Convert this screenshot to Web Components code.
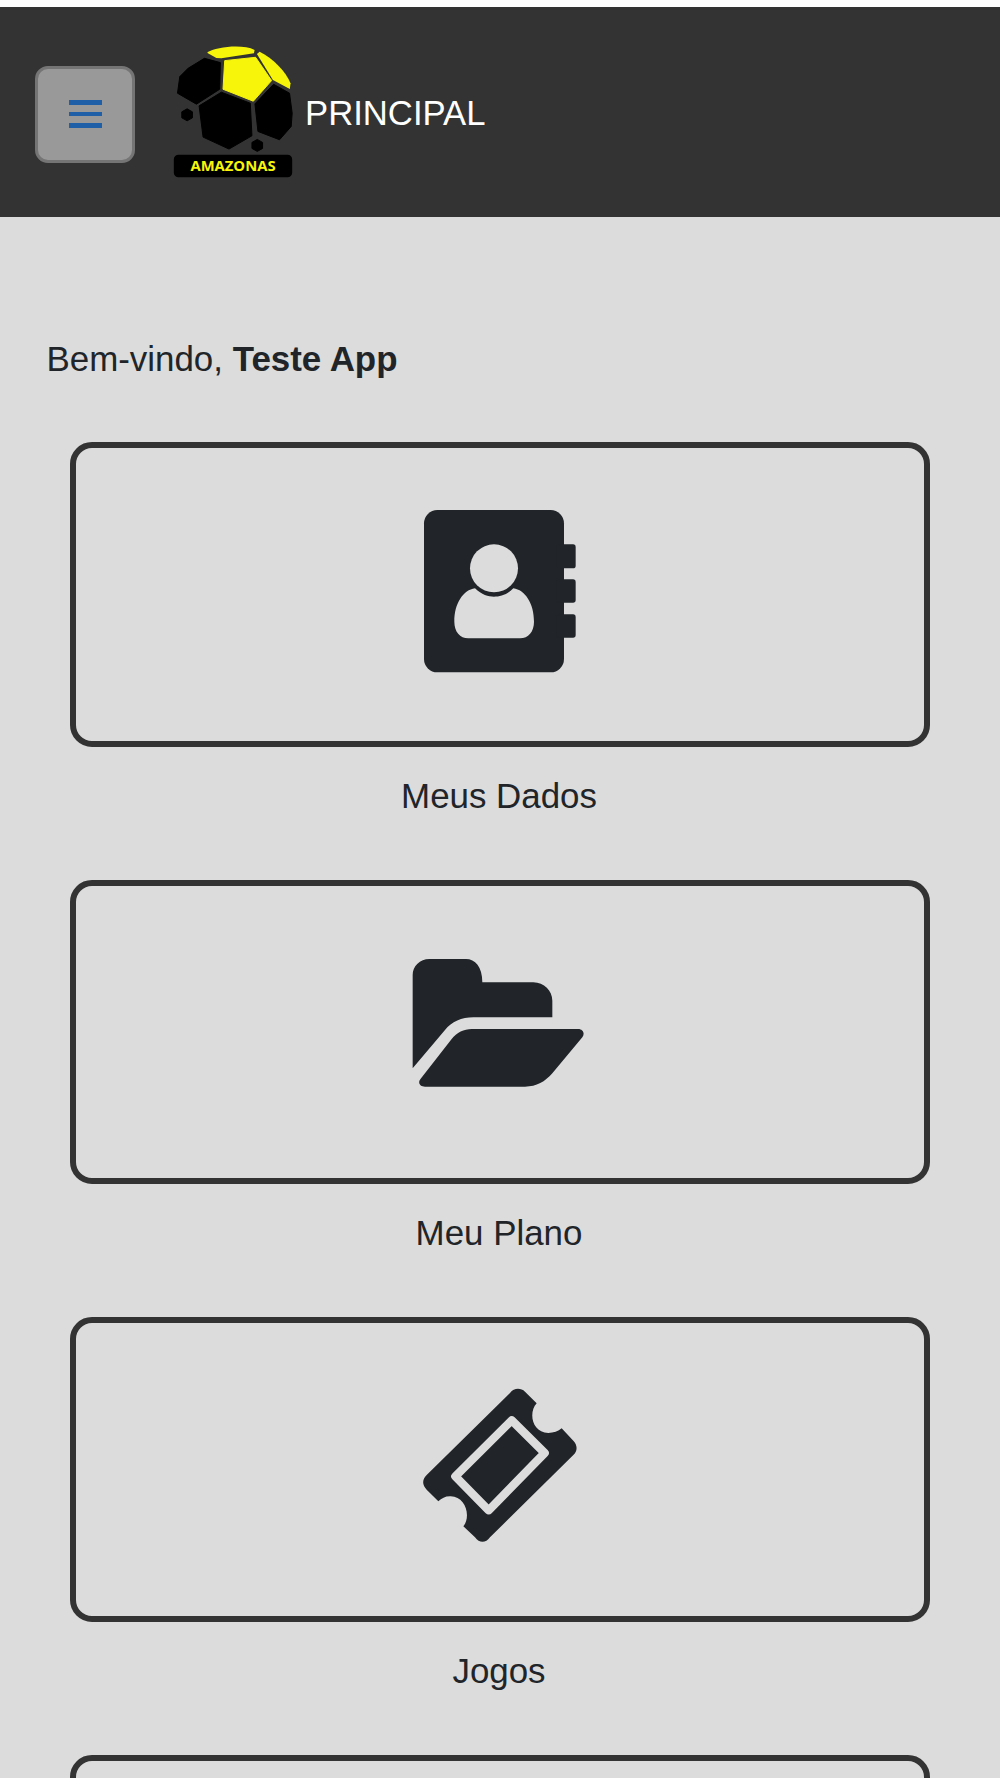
<!DOCTYPE html>
<html lang="pt">
<head>
<meta charset="utf-8">
<title>Principal</title>
<style>
  html, body { margin: 0; height: 1778px; overflow: hidden; background: #dcdcdc; }
  body { font-family: "Liberation Sans", Arial, sans-serif; color: #212529; }
</style>
</head>
<body>
<app-header title-text="PRINCIPAL"></app-header>
<home-page>
  <welcome-line name="Teste App"></welcome-line>

  <tile-card label="Meus Dados">
    <svg viewBox="0 0 600 600" width="200" height="200">
      <rect x="72" y="60" width="420" height="487" rx="40" fill="#212529"/>
      <rect x="470" y="163" width="57" height="72" rx="8" fill="#212529"/>
      <rect x="470" y="268" width="57" height="70" rx="8" fill="#212529"/>
      <rect x="470" y="373" width="57" height="70" rx="8" fill="#212529"/>
      <circle cx="282" cy="235" r="72" fill="#dcdcdc"/>
      <path fill="#dcdcdc" d="M163 395C163 340 190 300 225 295C245 315 265 320 282 320C300 320 320 315 340 295C375 300 402 340 402 395C402 425 385 445 360 445L205 445C180 445 163 425 163 395Z"/>
    </svg>
  </tile-card>

  <tile-card label="Meu Plano">
    <svg viewBox="30 -36 600 600" width="200" height="200">
      <path fill="#212529" d="M68 385L68 105C68 78 90 57 118 57L228 57C255 57 277 80 277 127L430 127C462 127 487 152 487 182L487 232L250 232C215 232 185 245 165 270Z"/>
      <path fill="#212529" d="M245 267L565 267C578 267 586 280 577 292L487 400C465 425 440 440 405 440L105 440C90 440 82 428 92 416L185 297C200 278 222 267 245 267Z"/>
    </svg>
  </tile-card>

  <tile-card label="Jogos">
    <svg viewBox="0 -12 600 600" width="200" height="200">
      <path fill="#212529" d="M330 72C342 56 362 56 375 68L410 103C385 130 395 190 445 192C460 192 475 187 485 178L520 215C533 228 533 246 520 258L270 505C257 523 238 523 225 505L190 472C215 440 195 380 150 382C135 382 125 388 115 397L80 362C66 348 66 332 80 318Z"/>
      <polygon points="335,154 434,252 266,424 166,322" fill="none" stroke="#dcdcdc" stroke-width="25" stroke-linejoin="round"/>
    </svg>
  </tile-card>

  <tile-card label=""></tile-card>
</home-page>

<script>
class AppHeader extends HTMLElement {
  constructor() {
    super();
    this.attachShadow({ mode: "open" });
  }
  connectedCallback() {
    const title = this.getAttribute("title-text");
    this.shadowRoot.innerHTML = `
    <style>
      :host {
        display: flex;
        align-items: center;
        height: 217px;
        padding-left: 35px;
        box-sizing: border-box;
        background: #333;
        border-top: 7px solid #fff;
      }
      .title {
        margin: 2px 0 0 12px;
        font-size: 34.7px;
        color: #fff;
      }
    </style>
    <menu-button></menu-button>
    <brand-logo></brand-logo>
    <div class="title">${title}</div>
    `;
  }
}

class MenuButton extends HTMLElement {
  constructor() {
    super();
    this.attachShadow({ mode: "open" });
    this.shadowRoot.innerHTML = `
    <style>
      :host {
        display: flex;
        flex-direction: column;
        align-items: center;
        justify-content: center;
        gap: 7px;
        box-sizing: border-box;
        width: 100px;
        height: 97px;
        margin-top: 4px;
        background: #999;
        border: 3px solid #757575;
        border-radius: 13px;
      }
      span {
        display: block;
        width: 33px;
        height: 4.5px;
        background: #1f5fa8;
      }
    </style>
    <span></span><span></span><span></span>
    `;
  }
}

class BrandLogo extends HTMLElement {
  constructor() {
    super();
    this.attachShadow({ mode: "open" });
    this.shadowRoot.innerHTML = `
    <style>
      :host {
        display: block;
        width: 120px;
        height: 133px;
        margin: 0 0 2px 38px;
      }
      svg { display: block; }
      polygon { stroke: #000; stroke-width: 3; stroke-linejoin: round; }
      polygon.yellow { fill: #f7f50a; stroke: #f7f50a; }
      text {
        font-family: "Open Sans", sans-serif;
        font-weight: 700;
        font-size: 44px;
        fill: #f7f50a;
      }
    </style>
    <svg viewBox="40 45 360 400" width="120" height="133">
      <path fill="#f7f50a" d="M142 68C170 50 250 42 285 60L283 70L185 85L170 84Z"/>
      <path fill="#f7f50a" d="M292 72L300 65C340 85 380 125 393 160L391 177L340 150Z"/>
      <polygon class="yellow" points="195,92 288,82 336,152 281,214 190,178"/>
      <polygon points="134,85 182,98 180,178 110,223 53,190 60,140 85,115"/>
      <polygon points="185,187 272,220 277,318 208,358 130,322 118,228"/>
      <polygon points="342,163 390,190 398,250 395,290 360,330 295,305 286,222"/>
      <polygon points="82,237 98,246 98,264 82,273 66,264 66,246"/>
      <polygon points="293,329 309,338 309,356 293,365 277,356 277,338"/>
      <rect x="42" y="375" width="356" height="68" rx="14"/>
      <text x="220" y="425" text-anchor="middle" textLength="256" lengthAdjust="spacingAndGlyphs">AMAZONAS</text>
    </svg>
    `;
  }
}

class HomePage extends HTMLElement {
  constructor() {
    super();
    this.attachShadow({ mode: "open" });
    this.shadowRoot.innerHTML = `
    <style>
      :host {
        display: block;
        padding-top: 116px;
      }
    </style>
    <slot></slot>
    `;
  }
}

class WelcomeLine extends HTMLElement {
  constructor() {
    super();
    this.attachShadow({ mode: "open" });
  }
  connectedCallback() {
    this.shadowRoot.innerHTML = `
    <style>
      :host {
        display: block;
        padding-left: 46.5px;
        margin-bottom: 57px;
        font-size: 34.9px;
        line-height: 52px;
      }
    </style>
    Bem-vindo, <b>${this.getAttribute("name")}</b>
    `;
  }
}

class TileCard extends HTMLElement {
  constructor() {
    super();
    this.attachShadow({ mode: "open" });
  }
  connectedCallback() {
    this.shadowRoot.innerHTML = `
    <style>
      :host {
        display: block;
        margin: 0 70px 58px;
      }
      .box {
        display: flex;
        align-items: center;
        justify-content: center;
        box-sizing: border-box;
        height: 304.5px;
        padding-bottom: 8px;
        border: 6px solid #333;
        border-radius: 22px;
      }
      .label {
        margin-top: 23px;
        padding-right: 2px;
        font-size: 34.9px;
        line-height: 52px;
        text-align: center;
      }
      ::slotted(svg) { display: block; }
    </style>
    <div class="box"><slot></slot></div>
    <div class="label">${this.getAttribute("label")}</div>
    `;
  }
}

customElements.define("menu-button", MenuButton);
customElements.define("brand-logo", BrandLogo);
customElements.define("app-header", AppHeader);
customElements.define("home-page", HomePage);
customElements.define("welcome-line", WelcomeLine);
customElements.define("tile-card", TileCard);
</script>
</body>
</html>
